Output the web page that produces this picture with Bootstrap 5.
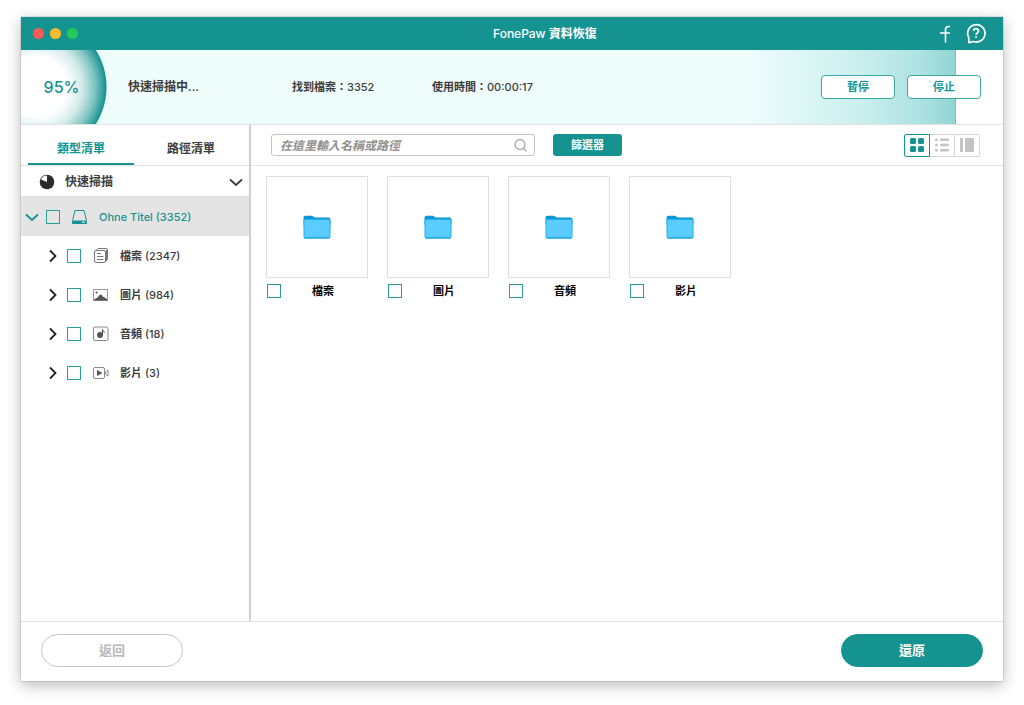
<!DOCTYPE html>
<html lang="zh-Hant">
<head>
<meta charset="utf-8">
<meta name="viewport" content="width=device-width, initial-scale=1">
<title>FonePaw 資料恢復</title>
<link rel="stylesheet" href="https://cdn.jsdelivr.net/npm/bootstrap@5.3.0/dist/css/bootstrap.min.css">
<style>
  :root { --teal: #159391; --line: #e2e2e2; --ink: #3c3c3c; }
  body { font-family: Inter, "Noto Sans CJK TC", sans-serif; font-size: 11px; line-height: 16px; font-weight: 600; color: var(--ink); background: #fff; padding: 17px 21px 24px; }
  button { font-weight: 600; }
  .latin { font-weight: 500; white-space: pre; }
  .app-window { background: #fff; box-shadow: 0 0 1px rgba(0,0,0,.5), 0 4px 14px rgba(0,0,0,.28); }
  .titlebar { height: 33px; background: var(--teal); color: #fff; padding: 0 17px 0 12px; }
  .title-start { flex: 13 1 0; gap: 6px; }
  .title-end { flex: 11 1 0; gap: 15px; }
  .light { width: 11px; height: 11px; border-radius: 50%; }
  .light-close { background: #ff5a57; } .light-min { background: #febb2e; } .light-max { background: #22cb58; }
  .titlebar h1 { font-size: 12px; line-height: 16px; font-weight: 600; }
  .status { height: 75px; border-bottom: 1px solid var(--line); }
  .progress-fill { height: 100%; background: linear-gradient(to right, #effcfc 0, #effcfc 78%, #c9efed 90%, #aee3e2 96%, #92d5d4 100%); border-right: 1px solid #6cc3c1; }
  .status-row { inset: 0; padding-right: 22px; }
  .gauge { width: 86px; background: radial-gradient(circle at 16px 37px, #fff 0, #fff 30px, #d3ebea 45px, #7fc3c1 58px, #179492 69px, transparent 70px); color: var(--teal); font-size: 16px; padding-right: 5px; }
  .col-state { width: 164px; padding-left: 21px; font-size: 12px; }
  .col-found { width: 141px; padding-left: 21px; }
  .col-time { padding-left: 20px; }
  .btn-line { width: 74px; height: 24px; padding: 0; font-size: 11px; line-height: 14px; border: 1px solid #3aa9a6; border-radius: 4px; background: #fff; color: var(--teal); }
  .sidebar { width: 230px; border-right: 2px solid #cfcfcf; }
  .bar { height: 41px; border-bottom: 1px solid var(--line); }
  .tabs { padding: 0 5px 0 7px; gap: 4px; }
  .tab { flex: 1 1 0; border: 0; border-bottom: 2px solid transparent; background: none; color: var(--ink); font-size: 12px; padding: 10px 0 0; }
  .tab.active { color: var(--teal); border-color: var(--teal); }
  .scan-head { height: 30px; border: 0; background: none; padding: 2px 6px 0 18px; font-size: 12px; color: var(--ink); }
  .scan-head .pie { margin-right: 10px; }
  .node { height: 39px; padding-left: 25px; }
  .node-root { height: 40px; background: #e4e4e4; color: var(--teal); padding-left: 4px; border-top: 1px solid #dcdcdc; }
  .twist { border: 0; background: none; padding: 0; width: 14px; height: 14px; display: flex; align-items: center; justify-content: center; margin-right: 7px; color: #222; }
  .node-root .twist { color: var(--teal); }
  .form-check-input.tick { width: 14px; height: 14px; margin: 0; border: 1px solid #2a9e9b; border-radius: 0; background-color: transparent; flex: none; }
  .form-check-input.tick:checked { background-color: var(--teal); }
  .node label { display: flex; align-items: center; margin-left: 11px; }
  .node label svg { width: 18px; height: 18px; margin-right: 10px; }
  .tools { padding: 0 23px 0 20px; }
  .search { width: 264px; }
  .search .form-control { height: 22px; padding: 0 28px 0 8px; font-size: 12px; line-height: 18px; font-style: italic; font-weight: 600; border: 1px solid #c4c4c4; border-radius: 3px; }
  .search .form-control::placeholder { color: #909090; }
  .search svg { right: 7px; top: 4px; }
  .btn-filter { width: 69px; height: 22px; padding: 0; margin-left: 18px; border: 0; border-radius: 3px; background: var(--teal); color: #fff; font-size: 11px; }
  .views .btn { width: 26px; height: 23px; padding: 0; border: 1px solid #d6d6d6; border-radius: 2px; color: #c4c4c4; display: flex; align-items: center; justify-content: center; background: #fff; }
  .views .btn-check:checked + .btn { color: var(--teal); border-color: var(--teal); background: #fff; }
  .tiles { padding: 10px 15px; gap: 19px; }
  .tile { width: 102px; }
  .thumb { height: 102px; border: 1px solid #dfdfdf; }
  .caption { height: 26px; padding: 0 3px 0 1px; color: #000; }
  .footer-bar { height: 60px; border-top: 1px solid var(--line); padding: 0 20px; }
  .pill { width: 142px; height: 33px; padding: 0; border-radius: 17px; font-size: 13px; border: 1px solid #c6c6c6; background: #fff; color: #b8b8b8; margin-bottom: 2px; }
  .pill-main { background: var(--teal); border-color: var(--teal); color: #fff; }
</style>
</head>
<body class="min-vh-100 d-flex flex-column">
<svg class="d-none" aria-hidden="true">
  <symbol id="right" viewBox="0 0 14 14"><path d="M4 1.500l5.500 5.500L4 12.500" fill="none" stroke="currentColor" stroke-width="1.800"/></symbol>
  <symbol id="down" viewBox="0 0 14 14"><path d="M1 4.500l6 5.500 6-5.500" fill="none" stroke="currentColor" stroke-width="1.800"/></symbol>
  <symbol id="folder" viewBox="0 0 28 24">
    <path d="M.5 3A2 2 0 0 1 2.500.8h6c1.500 0 2 1.700 3.500 1.700h13.500a2 2 0 0 1 2 2V10H.5z" fill="#0e97d8"/>
    <rect x="1" y="4.500" width="26" height="18.500" rx="1" fill="#5accff" stroke="#22b3ea"/>
    <path d="M1.500 23h25" stroke="#159fd8"/>
  </symbol>
</svg>
<main class="app-window flex-grow-1 d-flex flex-column">
  <header class="titlebar d-flex align-items-center">
    <div class="title-start d-flex">
      <span class="light light-close"></span><span class="light light-min"></span><span class="light light-max"></span>
    </div>
    <h1 class="m-0"><span class="latin">FonePaw </span>資料恢復</h1>
    <div class="title-end d-flex justify-content-end align-items-center">
      <a href="#" class="text-white d-flex" aria-label="Facebook"><svg width="12" height="18" viewBox="0 0 12 18"><path d="M11 1.500H9.500Q6.500 1.500 6.500 5v12.500M1 8h10" fill="none" stroke="currentColor" stroke-width="1.700"/></svg></a>
      <a href="#" class="text-white d-flex" aria-label="說明"><svg width="20" height="21" viewBox="0 0 20 21"><path d="M2.800 19.600v-5A8.700 8.700 0 1 1 7.500 18.500z" fill="none" stroke="currentColor" stroke-width="1.700" stroke-linejoin="round"/><path d="M7.600 8c0-3.200 4.900-3.200 4.900 0 0 1.800-2.400 1.800-2.400 4.100M10.100 13.200v1.800" fill="none" stroke="currentColor" stroke-width="1.700"/></svg></a>
    </div>
  </header>

  <section class="status position-relative">
    <div class="progress-fill" role="progressbar" aria-valuenow="95" aria-valuemin="0" aria-valuemax="100" style="width:95.2%"></div>
    <div class="status-row position-absolute d-flex align-items-center">
      <div class="gauge h-100 d-flex align-items-center justify-content-center"><span class="latin">95%</span></div>
      <div class="col-state">快速掃描中<span class="latin">...</span></div>
      <div class="col-found">找到檔案：<span class="latin">3352</span></div>
      <div class="col-time">使用時間：<span class="latin">00:00:17</span></div>
      <div class="ms-auto d-flex" style="gap:12px">
        <button type="button" class="btn btn-line fw-bold">暫停</button>
        <button type="button" class="btn btn-line fw-bold">停止</button>
      </div>
    </div>
  </section>

  <div class="d-flex flex-grow-1">
    <aside class="sidebar flex-shrink-0">
      <div class="bar tabs d-flex" role="tablist">
        <button type="button" role="tab" aria-selected="true" class="tab active">類型清單</button>
        <button type="button" role="tab" aria-selected="false" class="tab">路徑清單</button>
      </div>
      <button type="button" class="scan-head d-flex align-items-center w-100">
        <svg class="pie" width="16" height="16" viewBox="0 0 16 16"><circle cx="8" cy="8" r="7.300" fill="#2b2b2b"/><path d="M8 8V1.500A6.500 6.500 0 0 0 2 5.500z" fill="#fff"/></svg>
        快速掃描
        <svg class="ms-auto" width="14" height="14"><use href="#down"/></svg>
      </button>
      <div class="node node-root d-flex align-items-center">
        <button type="button" class="twist" aria-label="收合"><svg width="14" height="14"><use href="#down"/></svg></button>
        <input class="form-check-input tick" type="checkbox" id="n0">
        <label for="n0"><svg viewBox="0 0 18 18" fill="none" stroke="currentColor"><path d="M1.500 12.500L4 2.500h9l2.500 10"/><path d="M1.500 13h14v2.500h-14z" fill="currentColor"/><path d="M11 14.200h3" stroke="#fff"/></svg><span class="latin">Ohne Titel (3352)</span></label>
      </div>
      <div class="node d-flex align-items-center">
        <button type="button" class="twist" aria-label="展開"><svg width="14" height="14"><use href="#right"/></svg></button>
        <input class="form-check-input tick" type="checkbox" id="n1">
        <label for="n1"><svg viewBox="0 0 18 18" fill="none" stroke="#777"><path d="M4 3.500l2-2h8a1.500 1.500 0 0 1 1.500 1.500v9.500l-2 2"/><rect x="2.500" y="3.500" width="11" height="12" rx="1.500"/><path d="M5 6.500h4M5 9.500h6.500M5 12.500h6.500"/><path d="M14.500 3v10.500"/></svg>檔案<span class="latin"> (2347)</span></label>
      </div>
      <div class="node d-flex align-items-center">
        <button type="button" class="twist" aria-label="展開"><svg width="14" height="14"><use href="#right"/></svg></button>
        <input class="form-check-input tick" type="checkbox" id="n2">
        <label for="n2"><svg viewBox="0 0 18 18"><rect x="1.500" y="3.500" width="14" height="11" fill="none" stroke="#999"/><path d="M2 14.500c1-3 3-2 4-3.500 1.500-2.500 3-3.500 4.500-1 1 1.500 4 1.500 5 4.500z" fill="#555"/><circle cx="4.500" cy="6.500" r="1" fill="#555"/></svg>圖片<span class="latin"> (984)</span></label>
      </div>
      <div class="node d-flex align-items-center">
        <button type="button" class="twist" aria-label="展開"><svg width="14" height="14"><use href="#right"/></svg></button>
        <input class="form-check-input tick" type="checkbox" id="n3">
        <label for="n3"><svg viewBox="0 0 18 18"><rect x="1.500" y="2" width="14.500" height="13.500" rx="1.500" fill="none" stroke="#888"/><circle cx="8" cy="10" r="3" fill="#555"/><path d="M10.500 10V4.500q.3 2.500 2.500 3" fill="none" stroke="#555"/></svg>音頻<span class="latin"> (18)</span></label>
      </div>
      <div class="node d-flex align-items-center">
        <button type="button" class="twist" aria-label="展開"><svg width="14" height="14"><use href="#right"/></svg></button>
        <input class="form-check-input tick" type="checkbox" id="n4">
        <label for="n4"><svg viewBox="0 0 18 18"><rect x="1.500" y="3.500" width="11" height="11" rx="1.500" fill="none" stroke="#888"/><path d="M5 6l5.500 3L5 12z" fill="#555"/><path d="M13.500 8l2.500-2v6l-2.500-2z" fill="none" stroke="#888"/></svg>影片<span class="latin"> (3)</span></label>
      </div>
    </aside>

    <section class="flex-grow-1">
      <div class="bar tools d-flex align-items-center">
        <div class="search position-relative">
          <input type="search" class="form-control" aria-label="搜尋" placeholder="在這里輸入名稱或路徑">
          <svg class="position-absolute" width="14" height="15" viewBox="0 0 14 15" fill="none" stroke="#aaa" stroke-width="1.300"><circle cx="6" cy="6.500" r="5"/><path d="M9.500 10.300l3 3"/></svg>
        </div>
        <button type="button" class="btn btn-filter fw-bold">篩選器</button>
        <div class="views btn-group ms-auto" role="group" aria-label="檢視">
          <input type="radio" class="btn-check" name="view" id="v1" checked>
          <label class="btn" for="v1" aria-label="格狀"><svg width="14" height="14" fill="currentColor"><rect width="6" height="6" rx="1.500"/><rect x="8" width="6" height="6" rx="1.500"/><rect y="8" width="6" height="6" rx="1.500"/><rect x="8" y="8" width="6" height="6" rx="1.500"/></svg></label>
          <input type="radio" class="btn-check" name="view" id="v2">
          <label class="btn" for="v2" aria-label="清單"><svg width="14" height="14" fill="currentColor"><rect y=".5" width="3" height="2.600" rx="1"/><rect x="5" y=".5" width="9" height="2.600" rx="1"/><rect y="5.700" width="3" height="2.600" rx="1"/><rect x="5" y="5.700" width="9" height="2.600" rx="1"/><rect y="10.900" width="3" height="2.600" rx="1"/><rect x="5" y="10.900" width="9" height="2.600" rx="1"/></svg></label>
          <input type="radio" class="btn-check" name="view" id="v3">
          <label class="btn" for="v3" aria-label="預覽"><svg width="14" height="14" fill="currentColor"><rect width="3" height="14"/><rect x="5" width="9" height="14" rx="1"/></svg></label>
        </div>
      </div>
      <div class="tiles d-flex flex-wrap">
        <div class="tile"><div class="thumb d-flex align-items-center justify-content-center"><svg width="28" height="24"><use href="#folder"/></svg></div>
          <div class="caption d-flex align-items-center"><input class="form-check-input tick" type="checkbox" id="t1"><label for="t1" class="flex-grow-1 text-center fw-bold">檔案</label></div></div>
        <div class="tile"><div class="thumb d-flex align-items-center justify-content-center"><svg width="28" height="24"><use href="#folder"/></svg></div>
          <div class="caption d-flex align-items-center"><input class="form-check-input tick" type="checkbox" id="t2"><label for="t2" class="flex-grow-1 text-center fw-bold">圖片</label></div></div>
        <div class="tile"><div class="thumb d-flex align-items-center justify-content-center"><svg width="28" height="24"><use href="#folder"/></svg></div>
          <div class="caption d-flex align-items-center"><input class="form-check-input tick" type="checkbox" id="t3"><label for="t3" class="flex-grow-1 text-center fw-bold">音頻</label></div></div>
        <div class="tile"><div class="thumb d-flex align-items-center justify-content-center"><svg width="28" height="24"><use href="#folder"/></svg></div>
          <div class="caption d-flex align-items-center"><input class="form-check-input tick" type="checkbox" id="t4"><label for="t4" class="flex-grow-1 text-center fw-bold">影片</label></div></div>
      </div>
    </section>
  </div>

  <footer class="footer-bar d-flex align-items-center justify-content-between">
    <button type="button" class="btn pill fw-bold">返回</button>
    <button type="button" class="btn pill pill-main fw-bold">還原</button>
  </footer>
</main>
<script src="https://cdn.jsdelivr.net/npm/bootstrap@5.3.0/dist/js/bootstrap.bundle.min.js"></script>
</body>
</html>
